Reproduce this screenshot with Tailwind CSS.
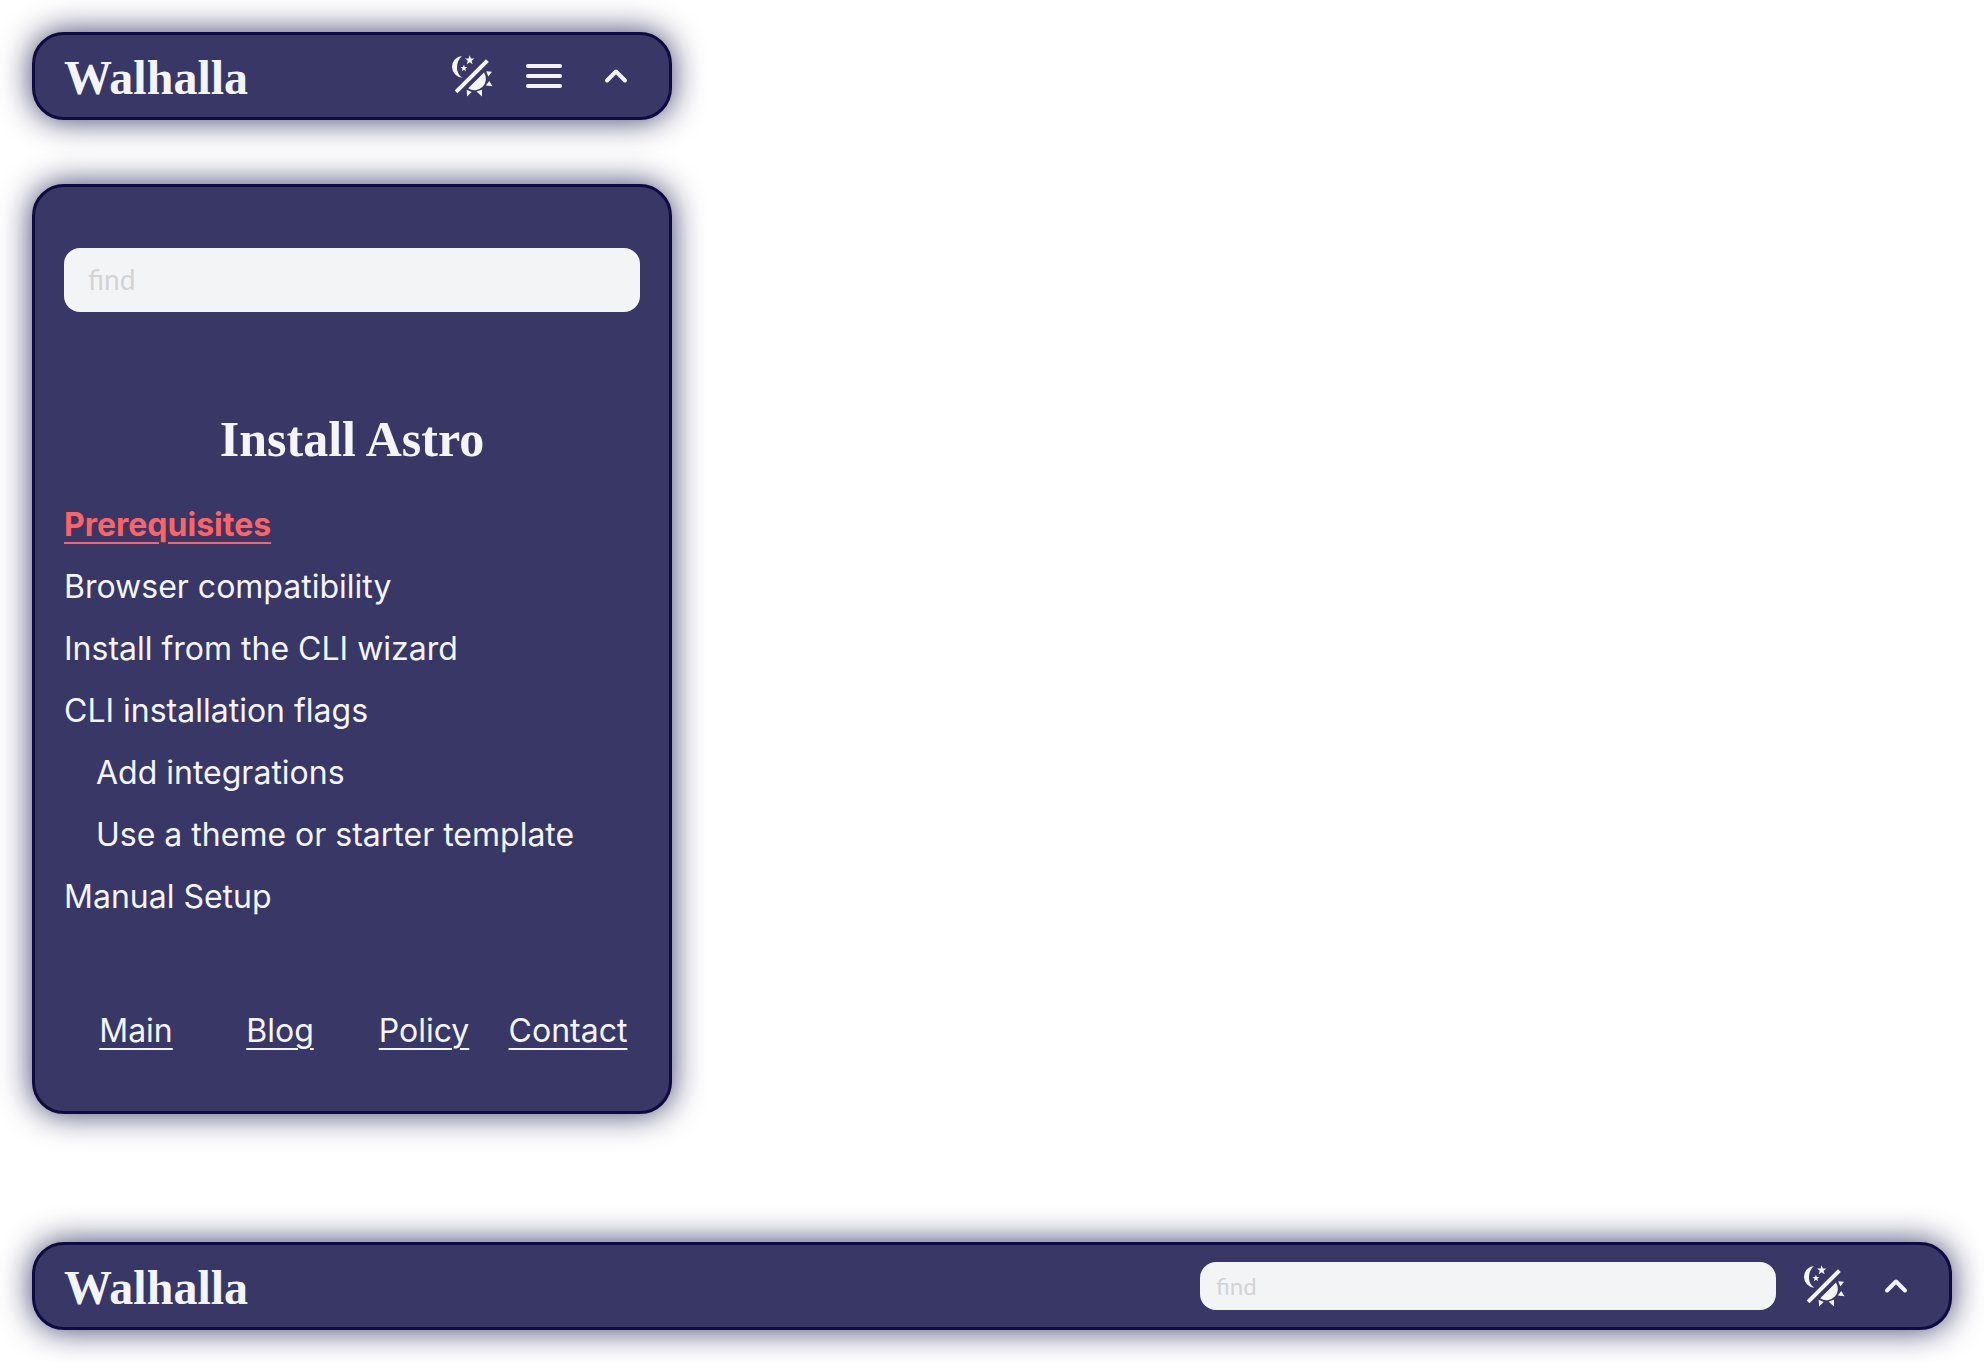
<!DOCTYPE html>
<html lang="en">
<head>
<meta charset="utf-8">
<meta name="viewport" content="width=device-width, initial-scale=1">
<title>Walhalla</title>
<script src="https://cdn.jsdelivr.net/npm/@tailwindcss/browser@4"></script>
</head>
<body class="bg-white px-8 pt-8 pb-8 font-['Inter',sans-serif] text-[32px] text-[#f3f4fc]">

<svg class="hidden" aria-hidden="true">
  <symbol id="theme" viewBox="0 0 42 42">
    <path fill="currentColor" d="M11 1A10.870 10.870 0 0 0 11.500 22.700C4.500 19 4 7 11 1Z"/>
    <path fill="currentColor" d="M18.700 0.200l1.200 3.300 3.500.1-2.800 2.200 1 3.400-2.900-2-2.900 2 1-3.400-2.800-2.200 3.500-.1zM12.900 9.700l.9 2.400 2.500.1-2 1.600.7 2.400-2.100-1.400-2.100 1.400.7-2.400-2-1.600 2.500-.1z"/>
    <path stroke="currentColor" stroke-width="4" stroke-linecap="square" d="M6.500 35.500L35 7"/>
    <path fill="currentColor" d="M33 17.500A11.400 11.400 0 0 1 17.200 33.300ZM35.200 16.300L41 16.800 37.300 21.500ZM38.300 26L41.500 31.300 34.800 30.500ZM25.500 36.500L31 34.800V41.500ZM15.700 34.700L20.700 37 16 41.500Z"/>
  </symbol>
  <symbol id="menu" viewBox="0 0 36 24">
    <path stroke="currentColor" stroke-width="4" stroke-linecap="round" d="M2 2H34M2 12H34M2 22H34"/>
  </symbol>
  <symbol id="chevron" viewBox="0 0 24 16">
    <path fill="none" stroke="currentColor" stroke-width="4" stroke-linecap="round" stroke-linejoin="round" d="M3 12.500L12 3.500L21 12.500"/>
  </symbol>
</svg>

<header class="flex h-[88px] w-full max-w-[640px] items-center justify-between rounded-[32px] border-3 border-[#0d0b40] bg-[#383765] pr-[17px] pl-[29px] shadow-[0_0_32px_#0d0b40cc]">
  <a href="#" class="pt-1 font-['Liberation_Serif',serif] text-[48px] leading-[56px] font-bold">Walhalla</a>
  <div class="flex">
    <button aria-label="Toggle theme" class="grid size-[72px] place-items-center"><svg class="size-[42px]"><use href="#theme"/></svg></button>
    <button aria-label="Menu" class="grid size-[72px] place-items-center"><svg class="h-6 w-9"><use href="#menu"/></svg></button>
    <button aria-label="Collapse" class="grid size-[72px] place-items-center"><svg class="h-4 w-6"><use href="#chevron"/></svg></button>
  </div>
</header>

<main class="mt-16 w-full max-w-[640px] rounded-[32px] border-3 border-[#0d0b40] bg-[#383765] px-[29px] pt-[61px] pb-[49px] shadow-[0_0_32px_#0d0b40cc]">
  <input type="search" aria-label="Find" placeholder="find" class="block h-16 w-full rounded-2xl bg-[#f3f4f6] px-6 pb-0.5 font-['Lato',sans-serif] text-[28px] text-gray-800 placeholder:text-[#d3d3d6]">
  <h2 class="mt-[99px] text-center font-['Liberation_Serif',serif] text-[50px] leading-[56px] font-bold">Install Astro</h2>
  <ul class="mt-[27px] leading-[62px]">
    <li><a href="#" class="font-bold text-[#ff6363] underline decoration-2 underline-offset-[6px]">Prerequisites</a></li>
    <li><a href="#">Browser compatibility</a></li>
    <li><a href="#">Install from the CLI wizard</a></li>
    <li><a href="#">CLI installation flags</a></li>
    <li class="pl-8"><a href="#">Add integrations</a></li>
    <li class="pl-8"><a href="#">Use a theme or starter template</a></li>
    <li><a href="#">Manual Setup</a></li>
  </ul>
  <nav class="mt-[72px] grid grid-cols-4 text-center leading-[62px]">
    <a href="#" class="underline decoration-2 underline-offset-[6px]">Main</a>
    <a href="#" class="underline decoration-2 underline-offset-[6px]">Blog</a>
    <a href="#" class="underline decoration-2 underline-offset-[6px]">Policy</a>
    <a href="#" class="underline decoration-2 underline-offset-[6px]">Contact</a>
  </nav>
</main>

<header class="mt-32 flex h-[88px] w-full items-center justify-between rounded-[32px] border-3 border-[#0d0b40] bg-[#383765] pr-[17px] pl-[29px] shadow-[0_0_32px_#0d0b40cc]">
  <a href="#" class="pt-1 font-['Liberation_Serif',serif] text-[48px] leading-[56px] font-bold">Walhalla</a>
  <div class="flex items-center">
    <input type="search" aria-label="Find" placeholder="find" class="mr-3 block h-12 w-[576px] rounded-2xl bg-[#f3f4f6] px-4 pb-0.5 font-['Lato',sans-serif] text-2xl text-gray-800 placeholder:text-[#d3d3d6]">
    <button aria-label="Toggle theme" class="grid size-[72px] place-items-center"><svg class="size-[42px]"><use href="#theme"/></svg></button>
    <button aria-label="Collapse" class="grid size-[72px] place-items-center"><svg class="h-4 w-6"><use href="#chevron"/></svg></button>
  </div>
</header>
</body>
</html>
